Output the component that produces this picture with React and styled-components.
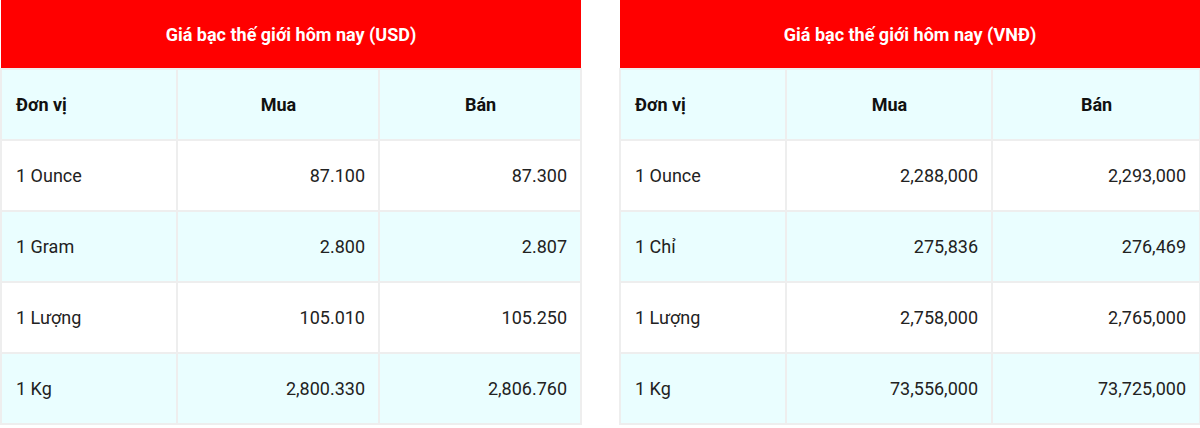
import React from 'react';
import styled, { createGlobalStyle } from 'styled-components';

const GlobalStyle = createGlobalStyle`
	body {
		margin: 0;
		background: #fff;
		font-family: Roboto, 'Liberation Sans', Arial, sans-serif;
		color: #222;
	}
`;

const Page = styled.div`
	display: flex;
	gap: 37px;
	width: 1200px;
	padding-left: 0;
	box-sizing: border-box;
	overflow: hidden;
`;

const Table = styled.table`
	border-collapse: collapse;
	table-layout: fixed;
	width: 580px;
	flex: none;
`;

const Title = styled.th`
	background: #ff0000;
	color: #fff;
	font-size: 18px;
	font-weight: 700;
	height: 68px;
	padding: 0;
	text-align: center;
	border: none;
`;

const Row = styled.tr`
	background: ${(p) => (p.$tint ? '#eafeff' : '#fff')};
`;

const Cell = styled.td`
	height: 69px;
	padding: 0 13px 0 14px;
	border: 2px solid #eeeeee;
	font-size: 18px;
	font-weight: ${(p) => (p.$head ? 700 : 400)};
	color: ${(p) => (p.$head ? '#111' : '#222')};
	text-align: ${(p) => p.$align || 'left'};
	white-space: nowrap;
`;

const PriceTable = ({ title, widths, rows }) => (
	<Table>
		<colgroup>
			{widths.map((w, i) => (
				<col key={i} style={{ width: w }} />
			))}
		</colgroup>
		<thead>
			<tr>
				<Title colSpan={3}>{title}</Title>
			</tr>
		</thead>
		<tbody>
			<Row $tint>
				<Cell $head>Đơn vị</Cell>
				<Cell $head $align='center'>Mua</Cell>
				<Cell $head $align='center'>Bán</Cell>
			</Row>
			{rows.map((r, i) => (
				<Row key={r[0]} $tint={i % 2 === 1}>
					<Cell>{r[0]}</Cell>
					<Cell $align='right'>{r[1]}</Cell>
					<Cell $align='right'>{r[2]}</Cell>
				</Row>
			))}
		</tbody>
	</Table>
);

const usd = [
	['1 Ounce', '87.100', '87.300'],
	['1 Gram', '2.800', '2.807'],
	['1 Lượng', '105.010', '105.250'],
	['1 Kg', '2,800.330', '2,806.760'],
];

const vnd = [
	['1 Ounce', '2,288,000', '2,293,000'],
	['1 Chỉ', '275,836', '276,469'],
	['1 Lượng', '2,758,000', '2,765,000'],
	['1 Kg', '73,556,000', '73,725,000'],
];

const App = () => (
	<>
		<GlobalStyle />
		<Page>
			<PriceTable
				title='Giá bạc thế giới hôm nay (USD)'
				widths={[176, 202, 202]}
				rows={usd}
			/>
			<PriceTable
				title='Giá bạc thế giới hôm nay (VNĐ)'
				widths={[166, 206, 208]}
				rows={vnd}
			/>
		</Page>
	</>
);

export default App;
